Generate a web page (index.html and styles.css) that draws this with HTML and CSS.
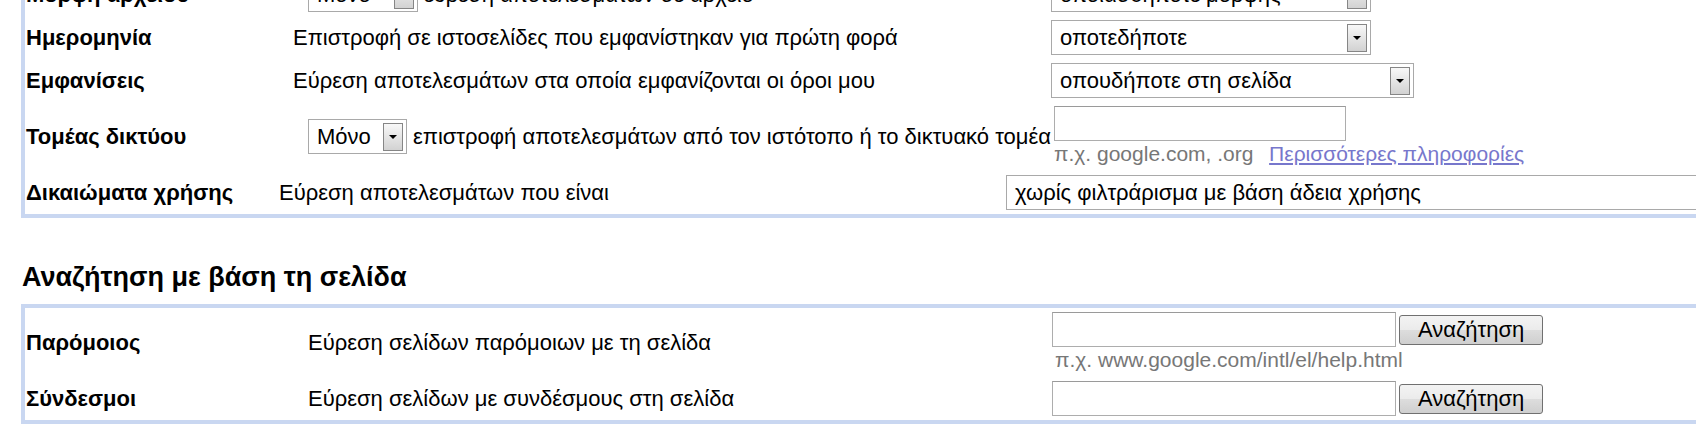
FILE: index.html
```html
<!DOCTYPE html>
<html lang="el">

<head>
    <meta charset="UTF-8">
    <meta name="viewport" content="width=device-width, initial-scale=1.0">
    <title>Σύνθετη αναζήτηση</title>
    <link rel="stylesheet" href="styles.css">
</head>

<body>
    <div class="page">
        <!-- options box: file type, date, occurrences, domain, rights -->
        <div class="box box-opts">
            <div class="opts">
                <div class="row">
                    <div class="label">Μορφή αρχείου</div>
                    <div class="desc">
                        <span class="select sel-only"><span class="select-value">Μόνο</span><span class="select-btn"></span></span>
                        εύρεση αποτελεσμάτων σε αρχείο
                    </div>
                    <div class="ctrl">
                        <span class="select sel-date"><span class="select-value">οποιασδήποτε μορφής</span><span class="select-btn"></span></span>
                    </div>
                </div>

                <div class="row">
                    <div class="label">Ημερομηνία</div>
                    <div class="desc">Επιστροφή σε ιστοσελίδες που εμφανίστηκαν για πρώτη φορά</div>
                    <div class="ctrl">
                        <span class="select sel-date"><span class="select-value">οποτεδήποτε</span><span class="select-btn"></span></span>
                    </div>
                </div>

                <div class="row">
                    <div class="label">Εμφανίσεις</div>
                    <div class="desc">Εύρεση αποτελεσμάτων στα οποία εμφανίζονται οι όροι μου</div>
                    <div class="ctrl">
                        <span class="select sel-occ"><span class="select-value">οπουδήποτε στη σελίδα</span><span class="select-btn"></span></span>
                    </div>
                </div>

                <div class="row row-domain">
                    <div class="label">Τομέας δικτύου</div>
                    <div class="desc">
                        <span class="select sel-only"><span class="select-value">Μόνο</span><span class="select-btn"></span></span>
                        επιστροφή αποτελεσμάτων από τον ιστότοπο ή το δικτυακό τομέα
                    </div>
                    <div class="ctrl ctrl-stack">
                        <input type="text" class="field field-domain">
                        <div class="hint">π.χ. google.com, .org &nbsp;<a href="#" class="more">Περισσότερες πληροφορίες</a></div>
                    </div>
                </div>
            </div>

            <div class="opts opts-rights">
                <div class="row">
                    <div class="label">Δικαιώματα χρήσης</div>
                    <div class="desc">Εύρεση αποτελεσμάτων που είναι</div>
                    <div class="ctrl">
                        <span class="select sel-rights"><span class="select-value">χωρίς φιλτράρισμα με βάση άδεια χρήσης</span><span class="select-btn"></span></span>
                    </div>
                </div>
            </div>
        </div>

        <h2 class="section-title">Αναζήτηση με βάση τη σελίδα</h2>

        <!-- page-specific search -->
        <div class="box box-page">
            <div class="opts opts-page">
                <div class="row row-similar">
                    <div class="label">Παρόμοιος</div>
                    <div class="desc">Εύρεση σελίδων παρόμοιων με τη σελίδα</div>
                    <div class="ctrl ctrl-stack">
                        <div class="field-line">
                            <input type="text" class="field field-page">
                            <button class="btn">Αναζήτηση</button>
                        </div>
                        <div class="hint">π.χ. www.google.com/intl/el/help.html</div>
                    </div>
                </div>

                <div class="row">
                    <div class="label">Σύνδεσμοι</div>
                    <div class="desc">Εύρεση σελίδων με συνδέσμους στη σελίδα</div>
                    <div class="ctrl">
                        <div class="field-line">
                            <input type="text" class="field field-page">
                            <button class="btn">Αναζήτηση</button>
                        </div>
                    </div>
                </div>
            </div>
        </div>
    </div>
</body>

</html>
```

FILE: styles.css
```css
body {
    margin: 0;
    padding: 0;
    overflow: hidden;
    font-family: "Liberation Sans", Arial, sans-serif;
    font-size: 22px;
    color: #000;
    background-color: #fff;
}

.page {
    padding-left: 21px;
}

.box {
    width: 1760px;
    border: 4px solid #c9d7f1;
    border-right: none;
}

.box-opts {
    margin-top: -31px;
}

.opts {
    display: grid;
    grid-template-columns: 268px 758px auto;
}

.opts-rights {
    grid-template-columns: 254px 727px auto;
}

.opts-page {
    grid-template-columns: 283px 744px auto;
}

.row {
    display: contents;
}

.row > div {
    display: flex;
    align-items: center;
    padding: 4px 0;
    white-space: nowrap;
    line-height: 25px;
}

.label {
    font-weight: bold;
    padding-left: 1px !important;
}

.desc {
    gap: 6px;
}

.ctrl-stack {
    flex-direction: column;
    align-items: flex-start !important;
}

/* fake windows style dropdowns */
.select {
    display: inline-flex;
    align-items: center;
    box-sizing: border-box;
    height: 35px;
    border: 1px solid #a9a9a9;
    background-color: #fff;
    padding-left: 8px;
}

.select-value {
    flex: 1;
}

.select-btn {
    display: flex;
    align-items: center;
    justify-content: center;
    box-sizing: border-box;
    width: 20px;
    height: 28px;
    margin: 0 3px 0 6px;
    border: 1px solid #868686;
    background: linear-gradient(#f8f8f8, #d2d2d2);
}

.select-btn::after {
    content: "";
    border-left: 4px solid transparent;
    border-right: 4px solid transparent;
    border-top: 4px solid #000;
}

.sel-only {
    width: 110px;
    margin-left: 15px;
}

.sel-date {
    width: 320px;
}

.sel-occ {
    width: 363px;
}

.sel-rights {
    width: 820px;
}

.field {
    box-sizing: border-box;
    height: 35px;
    margin: 0;
    border: 1px solid #adadad;
    border-top-color: #9a9a9a;
    background-color: #fff;
}

.field-domain {
    width: 292px;
    margin-left: 3px;
}

.field-page {
    width: 344px;
}

.field-line {
    display: flex;
    align-items: center;
    gap: 3px;
}

.btn {
    height: 30px;
    padding: 0 18px;
    font-family: "Liberation Sans", Arial, sans-serif;
    font-size: 22px;
    color: #000;
    border: 1px solid #707070;
    border-radius: 3px;
    background: linear-gradient(#f3f3f3 0%, #ebebeb 50%, #dddddd 51%, #cfcfcf 100%);
}

.hint {
    line-height: 26px;
    font-size: 21px;
    color: #777;
    padding-left: 3px;
}

.more {
    margin-left: 4px;
    color: #7777cc;
}

.section-title {
    margin: 44px 0 12px 1px;
    font-size: 27px;
    line-height: 30px;
    font-weight: bold;
}
```
